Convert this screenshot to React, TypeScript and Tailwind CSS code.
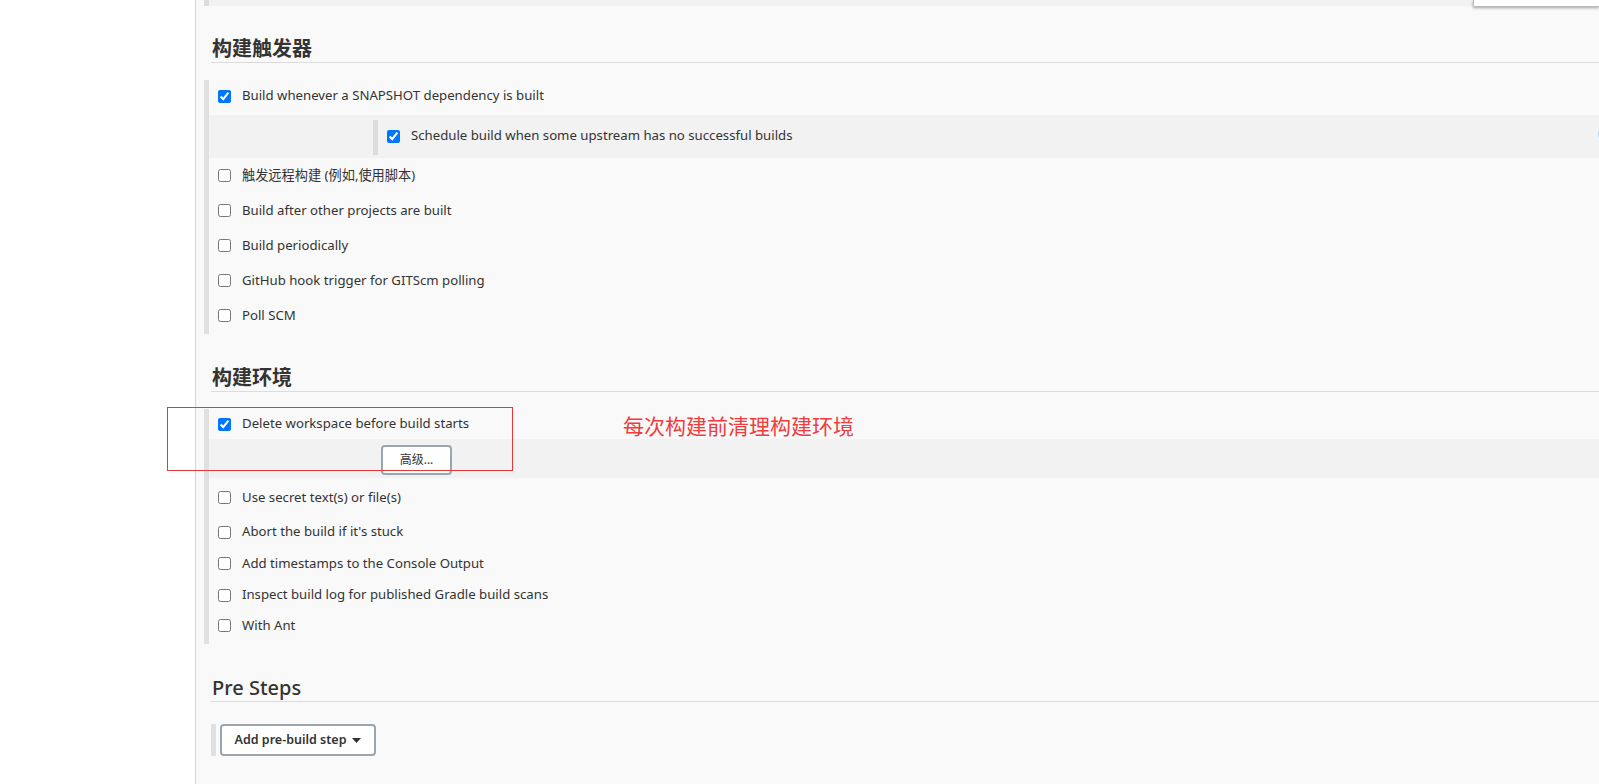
import React from "react";

const font = { fontFamily: '"Noto Sans", "Noto Sans CJK SC", sans-serif' };

function Cb({ checked }: { checked?: boolean }) {
  return (
    <input
      type="checkbox"
      defaultChecked={checked}
      className="w-[13px] h-[13px] m-0 shrink-0"
    />
  );
}

function Row({ label, checked, h }: { label: string; checked?: boolean; h: string }) {
  return (
    <div className={`flex items-center ${h}`}>
      <div className="ml-[9px] flex items-center">
        <Cb checked={checked} />
      </div>
      <span className="ml-[11px] text-[13.2px] text-[#333]">{label}</span>
    </div>
  );
}

function Heading({ text, mt, weight }: { text: string; mt: string; weight: string }) {
  return (
    <div className={`${mt} ml-[7px] border-b border-[#dcdcdc]`}>
      <div className={`pl-[1px] text-[20px] ${weight} leading-[26px] text-[#333]`}>{text}</div>
    </div>
  );
}

export default function App() {
  return (
    <div className="relative flex h-[784px] w-full overflow-hidden bg-white" style={font}>
      <div className="w-[196px] shrink-0 bg-white border-r border-[#d4d4d4]" />
      <div className="relative flex-1 bg-[#f9f9f9] pl-[8px]">
        {/* top remnant band */}
        <div className="flex h-[6px] bg-[#f2f2f2]">
          <div className="w-[5px] bg-[#dcdcdc]" />
        </div>

        <Heading text="构建触发器" mt="mt-[30px]" weight="font-bold" />

        <div className="mt-[17px] border-l-[5px] border-[#e0e0e0]">
          <div className="flex items-center h-[35px] pb-[3px]">
            <div className="ml-[9px] flex items-center">
              <Cb checked />
            </div>
            <span className="ml-[11px] text-[13.2px] text-[#333]">Build whenever a SNAPSHOT dependency is built</span>
          </div>
          <div className="bg-[#f2f2f2] pt-[5px] pb-[3px] pl-[164px]">
            <div className="flex items-center h-[35px] border-l-[5px] border-[#dcdcdc] pb-[3px]">
              <div className="ml-[9px] flex items-center">
                <Cb checked />
              </div>
              <span className="ml-[11px] text-[13.2px] text-[#333]">Schedule build when some upstream has no successful builds</span>
            </div>
          </div>
          <Row label="触发远程构建 (例如,使用脚本)" h="h-[35px]" />
          <Row label="Build after other projects are built" h="h-[35px]" />
          <Row label="Build periodically" h="h-[35px]" />
          <Row label="GitHub hook trigger for GITScm polling" h="h-[35px]" />
          <Row label="Poll SCM" h="h-[35px]" />
          <div className="h-[1px]" />
        </div>

        <Heading text="构建环境" mt="mt-[31px]" weight="font-bold" />

        <div className="mt-[17px] border-l-[5px] border-[#e0e0e0]">
          <Row label="Delete workspace before build starts" checked h="h-[30px]" />
          <div className="bg-[#f2f2f2] pt-[6px] pb-[3px] pl-[172px]">
            <button className="h-[30px] w-[71px] rounded-[4px] border-2 border-[#9aa5ad] bg-white text-[12px] text-[#333]">
              高级...
            </button>
          </div>
          <Row label="Use secret text(s) or file(s)" h="h-[39px]" />
          <Row label="Abort the build if it's stuck" h="h-[30px]" />
          <Row label="Add timestamps to the Console Output" h="h-[33px]" />
          <Row label="Inspect build log for published Gradle build scans" h="h-[30px]" />
          <Row label="With Ant" h="h-[31px]" />
          <div className="h-[3px]" />
        </div>

        <Heading text="Pre Steps" mt="mt-[31px]" weight="font-medium" />

        <div className="mt-[22px] ml-[7px] flex">
          <div className="w-[5px] bg-[#e0e0e0]" />
          <button className="ml-[4px] h-[32px] w-[156px] rounded-[4px] border-2 border-[#9aa5ad] bg-white text-[12.5px] font-semibold text-[#333] flex items-center justify-center gap-[6px]">
            <span>Add pre-build step</span>
            <svg width="9" height="5" viewBox="0 0 9 5"><path d="M0 0h9L4.5 5z" fill="#333" /></svg>
          </button>
        </div>

        {/* popup remnant top right */}
        <div className="absolute right-0 top-0 h-[7px] w-[126px] border-b border-l border-[#bbb] bg-white shadow-[0_1px_3px_rgba(0,0,0,0.35)]" />
        {/* help icon partially visible */}
        <div className="absolute right-[-11px] top-[128px] h-[12px] w-[12px] rounded-full bg-[#b8d6ee]" />
      </div>

      {/* annotation */}
      <div className="absolute left-[167px] top-[407px] h-[64px] w-[346px] border border-[#e53935]" />
      <div className="absolute left-[623px] top-[410px] text-[21px] leading-[30px] text-[#f03c3c]" style={{ fontFamily: '"Noto Sans CJK SC", sans-serif' }}>
        每次构建前清理构建环境
      </div>
    </div>
  );
}
